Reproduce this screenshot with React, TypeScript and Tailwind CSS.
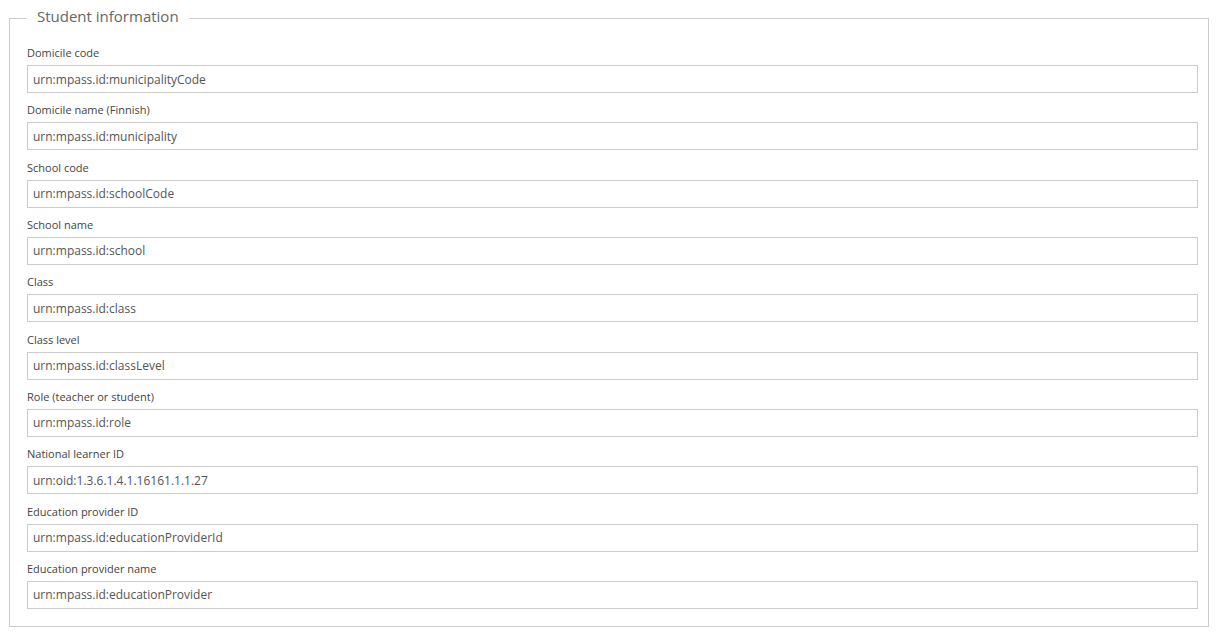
const fields = [
  { label: "Domicile code", value: "urn:mpass.id:municipalityCode" },
  { label: "Domicile name (Finnish)", value: "urn:mpass.id:municipality" },
  { label: "School code", value: "urn:mpass.id:schoolCode" },
  { label: "School name", value: "urn:mpass.id:school" },
  { label: "Class", value: "urn:mpass.id:class" },
  { label: "Class level", value: "urn:mpass.id:classLevel" },
  { label: "Role (teacher or student)", value: "urn:mpass.id:role" },
  { label: "National learner ID", value: "urn:oid:1.3.6.1.4.1.16161.1.1.27" },
  { label: "Education provider ID", value: "urn:mpass.id:educationProviderId" },
  { label: "Education provider name", value: "urn:mpass.id:educationProvider" },
];

export default function App() {
  return (
    <div className="min-h-[638px] bg-white font-['Open_Sans',sans-serif]">
      <fieldset className="ml-[9px] mt-[6px] w-[1200px] border border-[#cccccc] pl-[17px] pr-[10px] pt-[15px] pb-[17px]">
        <legend className="px-[10px] pb-[4px] text-[15px] leading-[20px] text-[#666666]">
          Student information
        </legend>
        <div className="flex flex-col gap-[9.33px]">
          {fields.map((f) => (
            <div key={f.label} className="flex flex-col">
              <label className="mb-[4px] text-[11px] leading-[16px] text-[#444444]">
                {f.label}
              </label>
              <input
                readOnly
                value={f.value}
                className="h-[28px] w-full border border-[#cccccc] px-[5px] text-[12px] text-[#555555] outline-none"
              />
            </div>
          ))}
        </div>
      </fieldset>
    </div>
  );
}
